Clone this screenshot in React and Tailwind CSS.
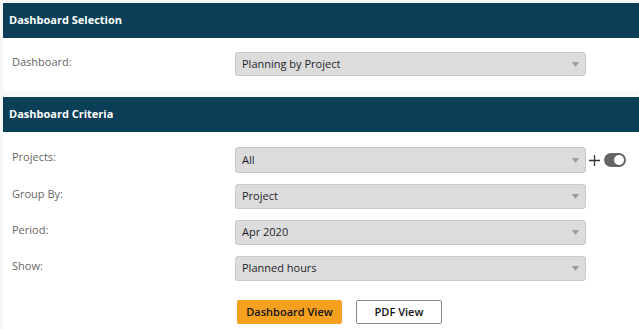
import React from "react";

const Caret = () => (
    <svg width="7" height="5" viewBox="0 0 7 5" className="shrink-0">
        <path d="M0 0h7L3.5 5z" fill="#9a9a9a" />
    </svg>
);

function SelectBox({ value, tall }) {
    return (
        <div
            className={`flex w-[351px] items-center justify-between rounded-[3px] border border-[#c9c9c9] bg-[#dcdcdc] pl-[6px] pr-[6px] text-[11px] text-[#1e1e2a] ${tall ? "h-[26px]" : "h-[25px]"}`}
        >
            <span>{value}</span>
            <Caret />
        </div>
    );
}

function Row({ label, children }) {
    return (
        <div className="flex items-start">
            <div className="w-[223px] pt-[2px] text-[11px] leading-[16px] text-[#666]">{label}</div>
            {children}
        </div>
    );
}

function Header({ title }) {
    return (
        <div className="flex h-[35px] items-center bg-[#0b3f57] px-[6px] text-[11px] font-bold text-white">
            {title}
        </div>
    );
}

export default function App() {
    return (
        <div className="min-h-screen bg-[#f8f8f8] pl-[3px] pt-[3px] font-['Open_Sans',sans-serif]">
            {/* selection */}
            <section className="bg-white">
                <Header title="Dashboard Selection" />
                <div className="pl-[9px] pt-[14px] pb-[15px]">
                    <Row label="Dashboard:">
                        <div className="flex h-[24px] w-[351px] items-center justify-between rounded-[3px] border border-[#c9c9c9] bg-[#dcdcdc] px-[6px] text-[11px] text-[#1e1e2a]">
                            <span>Planning by Project</span>
                            <Caret />
                        </div>
                    </Row>
                </div>
            </section>

            {/* criteria */}
            <section className="mt-[6px] min-h-[232px] bg-white">
                <Header title="Dashboard Criteria" />
                <div className="flex flex-col gap-[11px] pl-[9px] pt-[15px]">
                    <Row label="Projects:">
                        <SelectBox value="All" tall />
                        <div className="ml-[3px] flex h-[26px] items-center gap-[4px]">
                            <svg width="11" height="11" viewBox="0 0 11 11">
                                <path d="M5.5 0v11M0 5.5h11" stroke="#333" strokeWidth="1.3" />
                            </svg>
                            <div className="flex h-[14px] w-[22px] items-center justify-end rounded-full bg-[#666] pr-[2px]">
                                <div className="h-[10px] w-[10px] rounded-full bg-white" />
                            </div>
                        </div>
                    </Row>
                    <Row label="Group By:">
                        <SelectBox value="Project" />
                    </Row>
                    <Row label="Period:">
                        <SelectBox value="Apr 2020" />
                    </Row>
                    <Row label="Show:">
                        <SelectBox value="Planned hours" />
                    </Row>
                    <div className="mt-[8px] flex gap-[14px] pl-[225px]">
                        <button className="h-[24px] w-[105px] rounded-[2px] bg-[#f5a01e] text-[11px] font-semibold text-[#111]">
                            Dashboard View
                        </button>
                        <button className="h-[24px] w-[86px] rounded-[2px] border border-[#8a8a8a] bg-white text-[11px] font-semibold text-[#111]">
                            PDF View
                        </button>
                    </div>
                </div>
            </section>
        </div>
    );
}
